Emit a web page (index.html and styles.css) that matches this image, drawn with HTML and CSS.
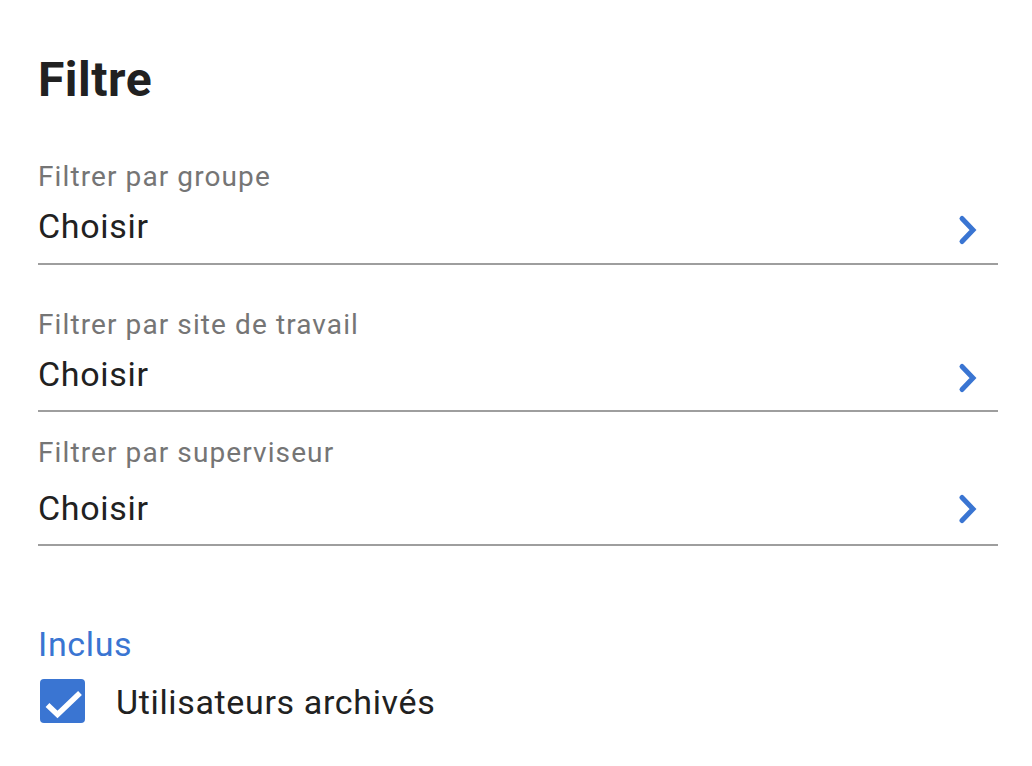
FILE: index.html
```html
<!DOCTYPE html>
<html lang="fr">
<head>
<meta charset="utf-8">
<title>Filtre</title>
<link rel="stylesheet" href="styles.css">
</head>
<body>
<main class="panel">
  <h1 class="title">Filtre</h1>

  <section class="field field-first">
    <div class="label">Filtrer par groupe</div>
    <div class="value-row">
      <span class="value">Choisir</span>
      <svg class="chevron" width="24" height="32" viewBox="0 0 24 32"><polyline points="5,4.5 16,16 5,27.5" fill="none" stroke="#3a75d2" stroke-width="5" stroke-linecap="round" stroke-linejoin="miter"/></svg>
    </div>
  </section>

  <section class="field field-second">
    <div class="label">Filtrer par site de travail</div>
    <div class="value-row">
      <span class="value">Choisir</span>
      <svg class="chevron" width="24" height="32" viewBox="0 0 24 32"><polyline points="5,4.5 16,16 5,27.5" fill="none" stroke="#3a75d2" stroke-width="5" stroke-linecap="round" stroke-linejoin="miter"/></svg>
    </div>
  </section>

  <section class="field field-third">
    <div class="label">Filtrer par superviseur</div>
    <div class="value-row">
      <span class="value">Choisir</span>
      <svg class="chevron chevron-third" width="24" height="32" viewBox="0 0 24 32"><polyline points="5,4.5 16,16 5,27.5" fill="none" stroke="#3a75d2" stroke-width="5" stroke-linecap="round" stroke-linejoin="miter"/></svg>
    </div>
  </section>

  <section class="include">
    <div class="include-title">Inclus</div>
    <label class="check-row">
      <span class="checkbox">
        <svg width="45" height="44" viewBox="0 0 45 44"><polyline points="7.5,26 17.5,35.5 40,14" fill="none" stroke="#ffffff" stroke-width="5.5" stroke-linecap="butt" stroke-linejoin="miter"/></svg>
      </span>
      <span class="check-text">Utilisateurs archivés</span>
    </label>
  </section>
</main>
</body>
</html>
```

FILE: styles.css
```css
html, body {
  margin: 0;
  padding: 0;
  background: #ffffff;
}

body {
  font-family: Roboto, "Noto Sans", "Liberation Sans", sans-serif;
  color: #212121;
  width: 1032px;
  height: 766px;
  overflow: hidden;
}

.panel {
  padding: 52px 34px 0 38px;
}

.title {
  margin: 0;
  font-size: 48px;
  line-height: 56px;
  font-weight: 700;
  letter-spacing: 0.5px;
  color: #212121;
}

.field {
  border-bottom: 2px solid #9e9e9e;
}

.field-first {
  margin-top: 53px;
  padding-bottom: 17px;
}

.field-second {
  margin-top: 44px;
  padding-bottom: 16px;
}

.field-third {
  margin-top: 25px;
  padding-bottom: 16px;
}

.label {
  font-size: 28px;
  line-height: 32px;
  letter-spacing: 1.1px;
  color: #757575;
}

.value-row {
  display: flex;
  align-items: center;
  justify-content: space-between;
  margin-top: 12px;
}

.field-third .value-row {
  margin-top: 19px;
}

.value {
  font-size: 34px;
  line-height: 40px;
  letter-spacing: 0.7px;
  color: #212121;
}

.chevron {
  display: block;
  margin-right: 17px;
  margin-top: 9px;
}

.chevron-third {
  margin-top: 1px;
}

.include {
  margin-top: 78px;
}

.include-title {
  font-size: 34px;
  line-height: 40px;
  letter-spacing: 0.65px;
  color: #3a75d2;
}

.check-row {
  display: flex;
  align-items: center;
  margin-top: 15px;
}

.checkbox {
  display: block;
  width: 45px;
  height: 44px;
  margin-left: 2px;
  border-radius: 4px;
  background: #3a75d2;
}

.checkbox svg {
  display: block;
}

.check-text {
  margin-left: 31px;
  margin-top: 1px;
  font-size: 34px;
  line-height: 40px;
  letter-spacing: 0.65px;
  color: #212121;
}
```
